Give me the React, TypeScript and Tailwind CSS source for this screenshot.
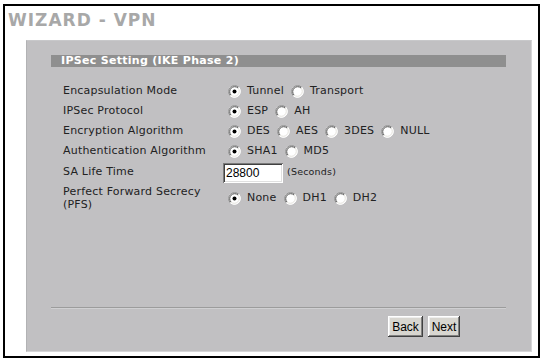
import React from "react";

function Radio({ checked }: { checked?: boolean }) {
  return (
    <svg width="13" height="13" viewBox="0 0 13 13" className="shrink-0">
      <circle cx="6.5" cy="6.5" r="6" fill="#ffffff" />
      <path d="M2.26 10.74 A6 6 0 0 1 10.74 2.26" fill="none" stroke="#8a8a8a" strokeWidth="1" />
      <path d="M2.97 10.03 A5 5 0 0 1 10.03 2.97" fill="none" stroke="#555555" strokeWidth="1" />
      <path d="M10.74 2.26 A6 6 0 0 1 2.26 10.74" fill="none" stroke="#ffffff" strokeWidth="1" />
      <path d="M10.03 2.97 A5 5 0 0 1 2.97 10.03" fill="none" stroke="#e4e2dc" strokeWidth="1" />
      {checked && <circle cx="6.5" cy="6.5" r="2" fill="#000000" />}
    </svg>
  );
}

function Opt({ label, checked }: { label: string; checked?: boolean }) {
  return (
    <span className="flex items-center">
      <span className="ml-[5px] mr-[6px] flex items-center">
        <Radio checked={checked} />
      </span>
      <span className="mr-[2px]">{label}</span>
    </span>
  );
}

function Row({ label, children }: { label: React.ReactNode; children: React.ReactNode }) {
  return (
    <div className="flex h-[20px] items-center">
      <div className="w-[160px] shrink-0">{label}</div>
      <div className="flex items-center">{children}</div>
    </div>
  );
}

export default function App() {
  return (
    <div className="h-[360px] w-[542px] bg-white pl-[3px] pt-[4px]">
      <div className="flex h-[354px] w-[537px] flex-col border-2 border-black">
        <div
          className="pl-[3px] pt-[4px] h-[34px] text-[17px] font-bold leading-[20px] tracking-[1px] text-[#a8a8a8]"
          style={{ fontFamily: '"DejaVu Sans", Verdana, sans-serif' }}
        >
          WIZARD - VPN
        </div>
        <div
          className="ml-[21px] mr-[6px] mb-[4px] flex flex-1 flex-col border-l border-t border-l-[#b2b2b4] border-t-[#c8c8ca] border-b border-r border-b-[#d6d6d8] border-r-[#d6d6d8] bg-[#c1c0c2] pl-[24px] pr-[25px] pt-[14px] text-[11px] tracking-[0.2px] text-[#222222]"
          style={{ fontFamily: '"DejaVu Sans", Verdana, sans-serif' }}
        >
          <div className="flex h-[12px] items-center bg-[#8f8f8f] pl-[10px] text-[11px] font-bold tracking-[0.3px] text-white">
            IPSec Setting (IKE Phase 2)
          </div>
          <div className="mt-[14px] flex flex-col pl-[12px]">
            <Row label="Encapsulation Mode">
              <Opt label="Tunnel" checked />
              <Opt label="Transport" />
            </Row>
            <Row label="IPSec Protocol">
              <Opt label="ESP" checked />
              <Opt label="AH" />
            </Row>
            <Row label="Encryption Algorithm">
              <Opt label="DES" checked />
              <Opt label="AES" />
              <Opt label="3DES" />
              <Opt label="NULL" />
            </Row>
            <Row label="Authentication Algorithm">
              <Opt label="SHA1" checked />
              <Opt label="MD5" />
            </Row>
            <div className="mt-[1px] flex h-[21px] items-center">
              <div className="w-[160px] shrink-0">SA Life Time</div>
              <div className="flex items-center">
                <div
                  className="flex h-[20px] w-[60px] items-center bg-white pl-[3px] text-[12px] tracking-normal text-black shadow-[inset_1px_1px_#7a7a7a,inset_-1px_-1px_#ffffff,inset_2px_2px_#404040,inset_-2px_-2px_#e0e0e0]"
                  style={{ fontFamily: '"Liberation Sans", Arial, sans-serif' }}
                >
                  28800
                </div>
                <span className="ml-[4px] text-[9.5px]">(Seconds)</span>
              </div>
            </div>
            <div className="mt-[1px] flex h-[28px] items-center">
              <div className="w-[160px] shrink-0 leading-[13px]">
                Perfect Forward Secrecy
                <br />
                (PFS)
              </div>
              <div className="flex items-center">
                <Opt label="None" checked />
                <Opt label="DH1" />
                <Opt label="DH2" />
              </div>
            </div>
          </div>
          <div className="flex-1" />
          <div className="h-[2px] border-t border-t-[#9c9c9c] border-b border-b-[#d0d0d2]" />
          <div
            className="mt-[7px] mb-[14px] flex justify-end gap-[5px] pr-[46px] text-[12px] tracking-normal text-black"
            style={{ fontFamily: '"Liberation Sans", Arial, sans-serif' }}
          >
            <div className="flex h-[21px] w-[35px] items-center justify-center bg-[#d8d6d0] shadow-[inset_-1px_-1px_#404040,inset_1px_1px_#ffffff,inset_-2px_-2px_#808080,inset_2px_2px_#eeeeee]">
              Back
            </div>
            <div className="flex h-[21px] w-[32px] items-center justify-center bg-[#d8d6d0] shadow-[inset_-1px_-1px_#404040,inset_1px_1px_#ffffff,inset_-2px_-2px_#808080,inset_2px_2px_#eeeeee]">
              Next
            </div>
          </div>
        </div>
      </div>
    </div>
  );
}
